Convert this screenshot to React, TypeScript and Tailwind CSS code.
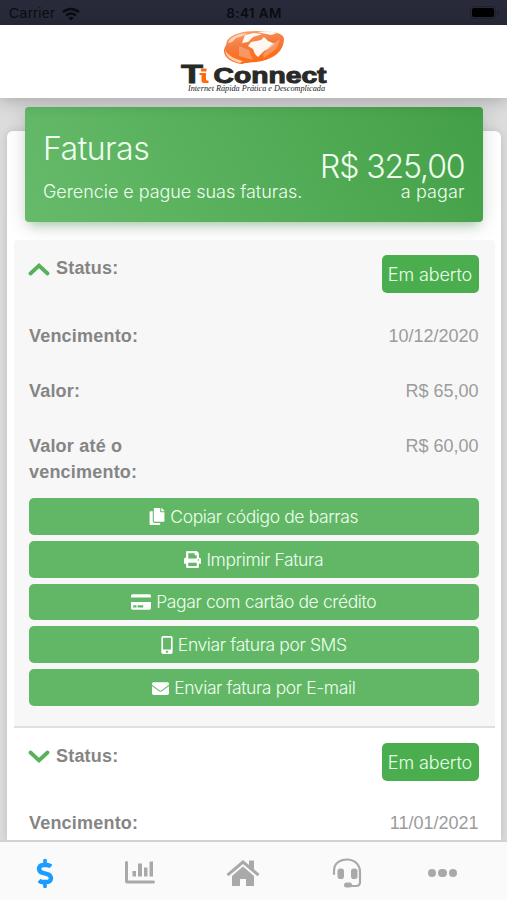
import type { ReactNode } from "react";
import {
  FaCopy,
  FaCreditCard,
  FaDollarSign,
  FaEnvelope,
  FaMobileAlt,
  FaPrint,
} from "react-icons/fa";

const actions = [
  { label: "Copiar código de barras", icon: <FaCopy className="h-[17px] w-4" /> },
  { label: "Imprimir Fatura", icon: <FaPrint className="size-[17px]" /> },
  { label: "Pagar com cartão de crédito", icon: <FaCreditCard className="h-[18px] w-5" /> },
  { label: "Enviar fatura por SMS", icon: <FaMobileAlt className="h-[18px] w-3" /> },
  { label: "Enviar fatura por E-mail", icon: <FaEnvelope className="size-[17px]" /> },
];

function StatusBar() {
  return (
    <div className="grid h-[25px] shrink-0 grid-cols-3 items-center bg-[#282a3a] pr-2 pl-[9px] text-[14px] text-[#0b0c12]">
      <div className="flex items-center gap-[7px] pt-[2px]">
        <span className="tracking-[0.5px]">Carrier</span>
        <svg viewBox="0 0 18 14" className="h-[14px] w-[18px]" fill="none" stroke="currentColor" strokeWidth="2.5">
          <path d="M1 5.2C5.5.8 12.500.8 17 5.200" />
          <path d="M4.200 8.500c2.700-2.600 6.900-2.600 9.600 0" />
          <path d="M9 13.500 6.300 10.800c1.500-1.400 3.900-1.400 5.400 0z" fill="currentColor" stroke="none" />
        </svg>
      </div>
      <span className="pt-[2px] text-center font-[Inter] text-[13.500px] font-semibold tracking-[0.4px]">8:41 AM</span>
      <div className="flex items-center justify-end gap-px">
        <div className="rounded-[4px] border border-[#1f202c] p-px">
          <div className="h-[9px] w-[22px] rounded-[2px] bg-black" />
        </div>
        <div className="h-1 w-[2px] rounded-r bg-[#1f202c]" />
      </div>
    </div>
  );
}

function Logo() {
  return (
    <svg viewBox="0 0 150 68" className="h-[68px] w-[150px]">
      <defs>
        <linearGradient id="globe" x1="0" y1="0" x2="0.3" y2="1">
          <stop offset="0" stopColor="#f9a476" />
          <stop offset="0.5" stopColor="#f47a3c" />
          <stop offset="1" stopColor="#ff6a10" />
        </linearGradient>
      </defs>
      <path d="M48 13C52 6 64 3 77 3c17 0 28 2 28 8 0 12-10 19-22 22-8 2-14 1-20 3-10-1-17-6-18-12 0-4 1-5 2-7z" fill="url(#globe)" />
      {/* continents and highlights */}
      <path d="M78 4c7-1 14-1 20 1l-6 2z" fill="#fff8f2" />
      <path d="M72 14l10-2 3-3 4 4 7 3-5 4-6 3-6 6-3-3-2-5-5-3z" fill="#fff8f2" />
      <path d="M66 7l9-2 8 1-9 3-5 5-6 1z" fill="#fff8f2" />
      <path d="M51 11c5-4 11-6 17-6l-4 3-7 2-4 4-4 1z" fill="#fcd0b6" />
      <path d="M60 18l10 4 4 10-14-4zM84 26l8-9 9-6-3 9-13 10z" fill="#f8a67b" fillOpacity="0.7" />
      <path d="M46 22c3 6 10 9 18 11l-3 2c-9-2-14-6-15-13z" fill="#fdd0b3" />
      <g fontFamily="Liberation Sans, sans-serif" fontWeight="700" fill="#292927" stroke="#292927">
        <text x="2" y="55" fontSize="26" textLength="22" lengthAdjust="spacingAndGlyphs" strokeWidth="0.8">T</text>
        <text x="34.500" y="54.500" fontSize="22.500" textLength="113" lengthAdjust="spacingAndGlyphs" strokeWidth="1">Connect</text>
      </g>
      <path d="M22 40.500h5.500v3H22zM20.500 45H27v6.500q0 1 1 1h1.500V55H25q-2.500 0-2.500-2.500V47h-2z" fill="#ff6b0b" />
      <text x="9" y="63" fontSize="7.500" textLength="137" lengthAdjust="spacingAndGlyphs" fontFamily="Liberation Serif, serif" fontStyle="italic" fill="#222">
        Internet Rápida Prática e Descomplicada
      </text>
    </svg>
  );
}

function Chevron({ open }: { open: boolean }) {
  return (
    <svg viewBox="0 0 22 14" className="h-[14px] w-[22px]" fill="none" stroke="#55b15a" strokeWidth="3.800" strokeLinecap="round">
      {open ? <path d="m2.500 11.500 8.500-8 8.500 8" /> : <path d="m2.500 2.500 8.500 8 8.500-8" />}
    </svg>
  );
}

function StatusRow({ open }: { open: boolean }) {
  return (
    <div className="flex items-start justify-between">
      <div className="flex items-center gap-[6px] pl-[14px]">
        <Chevron open={open} />
        <span className="text-[18px] leading-[27px] font-bold tracking-[0.2px]">Status:</span>
      </div>
      <span className="flex h-[38px] w-[97px] items-center justify-center rounded-[5px] bg-[#4aae4e] font-[Inter] text-[18px] font-light tracking-[-0.1px] text-[#eaffea]">
        Em aberto
      </span>
    </div>
  );
}

function Field({ label, children }: { label: string; children: ReactNode }) {
  return (
    <div className="flex items-start justify-between pl-[15px] leading-[26px]">
      <span className="w-[140px] text-[18px] font-bold tracking-[0.2px]">{label}</span>
      <span className="text-[18px] text-[#9c9c9c]">{children}</span>
    </div>
  );
}

function TabBar() {
  return (
    <nav className="grid h-[60px] shrink-0 grid-cols-[90px_99px_108px_99px_93px] items-center border-t-2 border-[#d2d2d2] bg-[#fafafa] pt-1 text-[#a9a9a9]">
      <FaDollarSign className="h-[29px] w-[18px] justify-self-center text-[#199dff]" />
      <svg viewBox="0 0 30 24" className="h-6 w-[30px] justify-self-center" fill="currentColor">
        <path d="M0 1.500Q0 0 1.500 0T3 1.500V19.500H28.500Q30 19.500 30 21T28.500 22.500H2Q0 22.500 0 20.500zM7.500 10h3.500v5.500H7.500zM13 2.500h4v13h-4zM19 6.500h3.500v9H19zM24.500.5H28v15h-3.500z" />
      </svg>
      <svg viewBox="0 0 34 28" className="h-7 w-[34px] justify-self-center" fill="currentColor">
        <path d="M17 1 23 6V1.500h5v8.700l5.500 4.800-2 2.300L17 5 2.500 17.300.5 15z" />
        <path d="M17 7.500 28 17v10h-8v-7h-6v7H6V17z" />
      </svg>
      <svg viewBox="0 0 30 30" className="size-[30px] justify-self-center" fill="none" stroke="currentColor" strokeWidth="2.200">
        <path d="M2 16v-3C2 5 8 1.500 15 1.500S28 6 28 14v10q0 4-4 4h-7" strokeLinecap="round" />
        <rect x="5.500" y="10.500" width="6.500" height="10.500" rx="2.800" fill="currentColor" stroke="none" />
        <rect x="19" y="10.500" width="6.500" height="10.500" rx="2.800" fill="currentColor" stroke="none" />
        <rect x="12" y="24.500" width="8" height="5" rx="2.500" fill="currentColor" stroke="none" />
      </svg>
      <div className="flex gap-[2px] justify-self-center">
        <span className="size-[8.500px] rounded-full bg-current" />
        <span className="size-[8.500px] rounded-full bg-current" />
        <span className="size-[8.500px] rounded-full bg-current" />
      </div>
    </nav>
  );
}

export default function App() {
  return (
    <div className="flex h-[900px] w-[507px] flex-col overflow-hidden bg-[#dcdcdc] font-['Liberation_Sans',sans-serif] text-[#858585]">
      <StatusBar />
      <header className="z-10 flex h-[73px] shrink-0 justify-center bg-white pt-[3px] shadow-[0_2px_16px_rgba(0,0,0,0.25)]">
        <Logo />
      </header>

      <main className="flex min-h-0 flex-1 flex-col px-[7px] pt-[33px] pr-[6px]">
        <section className="min-h-0 flex-1 rounded-t-[6px] bg-white pr-[6px] pl-[7px] shadow-[0_1px_8px_rgba(0,0,0,0.15)]">
          <div className="mr-[12.500px] -mt-6 ml-[11px] flex h-[115px] justify-between rounded-[4px] bg-linear-60 from-[#66bb6a] to-[#43a047] pr-[18px] pl-[18px] font-[Inter] font-light whitespace-nowrap text-[#efffef] shadow-[0_4px_20px_rgba(0,0,0,0.14),0_7px_10px_-5px_rgba(76,175,80,0.4)]">
            <div className="pt-[22px]">
              <h1 className="text-[32px] leading-10 tracking-[-0.5px]">Faturas</h1>
              <p className="pt-[9px] text-[18px] leading-7 tracking-[-0.05px]">Gerencie e pague suas faturas.</p>
            </div>
            <div className="pt-[41px] text-right">
              <p className="text-[32px] leading-[38px] tracking-[-1.100px]">R$ 325,00</p>
              <p className="text-[18px] leading-3 tracking-[0.1px]">a pagar</p>
            </div>
          </div>

          <div className="mt-[18px] h-[488px] rounded-t-[4px] border-b-2 border-[#dfdfdf] bg-[#f7f7f7] pt-[15px] pr-[16.500px]">
            <StatusRow open />
            <div className="mt-[30px] flex flex-col gap-[29px]">
              <Field label="Vencimento:">10/12/2020</Field>
              <Field label="Valor:">R$ 65,00</Field>
              <Field label="Valor até o vencimento:">R$ 60,00</Field>
            </div>
            <div className="mt-[13px] flex flex-col gap-[6px] pl-[15px]">
              {actions.map((action) => (
                <button
                  key={action.label}
                  className="flex h-[36.800px] items-center justify-center gap-[5px] rounded-[5px] bg-[#61b765] pt-px font-[Inter] text-[17.500px] font-light tracking-[-0.38px] text-[#efffef]"
                >
                  <span className="text-white">{action.icon}</span>
                  <span>{action.label}</span>
                </button>
              ))}
            </div>
          </div>

          <div className="pt-[15px] pr-[16.500px]">
            <StatusRow open={false} />
            <div className="mt-[29px]">
              <Field label="Vencimento:">11/01/2021</Field>
            </div>
          </div>
        </section>
      </main>
      <TabBar />
    </div>
  );
}
